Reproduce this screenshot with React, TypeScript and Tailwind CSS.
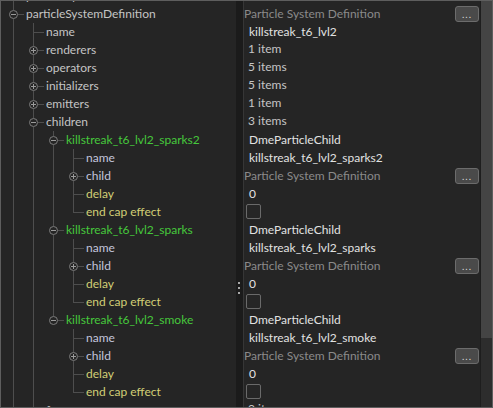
import React from "react";

type Row = {
  level: number;
  text: string;
  color: string;
  exp?: "minus" | "plus";
  guides: number[];
  last?: boolean;
  open?: boolean;
};

const C_MAIN = "#c4c4c4";
const C_ATTR = "#c3c6dc";
const C_YEL = "#d2cf76";
const C_GRN = "#46c83c";

const cx = (l: number) => 12 + 20 * l;

function childRows(parentLast: boolean): Row[] {
  const g = parentLast ? [12, 32] : [12, 32, 52];
  return [
    { level: 3, text: "name", color: C_ATTR, guides: g },
    { level: 3, text: "child", color: C_ATTR, exp: "plus", guides: g },
    { level: 3, text: "delay", color: C_YEL, guides: g },
    { level: 3, text: "end cap effect", color: C_YEL, guides: g, last: true },
  ];
}

const rows: Row[] = [
  { level: 0, text: "particleSystemDefinition", color: C_MAIN, guides: [] },
  { level: 0, text: "particleSystemDefinition", color: C_MAIN, exp: "minus", guides: [], open: true },
  { level: 1, text: "name", color: C_MAIN, guides: [12] },
  { level: 1, text: "renderers", color: C_MAIN, exp: "plus", guides: [12] },
  { level: 1, text: "operators", color: C_MAIN, exp: "plus", guides: [12] },
  { level: 1, text: "initializers", color: C_MAIN, exp: "plus", guides: [12] },
  { level: 1, text: "emitters", color: C_MAIN, exp: "plus", guides: [12] },
  { level: 1, text: "children", color: C_MAIN, exp: "minus", guides: [12], open: true },
  { level: 2, text: "killstreak_t6_lvl2_sparks2", color: C_GRN, exp: "minus", guides: [12, 32], open: true },
  ...childRows(false),
  { level: 2, text: "killstreak_t6_lvl2_sparks", color: C_GRN, exp: "minus", guides: [12, 32], open: true },
  ...childRows(false),
  { level: 2, text: "killstreak_t6_lvl2_smoke", color: C_GRN, exp: "minus", guides: [12, 32], open: true, last: true },
  ...childRows(true),
  { level: 1, text: "forces", color: C_MAIN, guides: [12] },
];

const LINE = "#4e4e4e";

function TreeRow({ r }: { r: Row }) {
  const x = cx(r.level);
  const w = x + 12;
  const h = 18;
  const mid = 9;
  return (
    <div className="flex h-[18px] items-center whitespace-nowrap">
      <svg width={w} height={h} className="shrink-0" shapeRendering="crispEdges">
        {r.guides.map((g) => (
          <line key={g} x1={g + 0.5} y1={0} x2={g + 0.5} y2={h} stroke={LINE} />
        ))}
        {/* own vertical */}
        {r.exp ? (
          <>
            <line x1={x + 0.5} y1={0} x2={x + 0.5} y2={mid - 4} stroke={LINE} />
            {!r.last && <line x1={x + 0.5} y1={mid + 5} x2={x + 0.5} y2={h} stroke={LINE} />}
            <line x1={x + 5} y1={mid + 0.5} x2={x + 11} y2={mid + 0.5} stroke={LINE} />
          </>
        ) : (
          <>
            <line x1={x + 0.5} y1={0} x2={x + 0.5} y2={r.last ? mid + 1 : h} stroke={LINE} />
            <line x1={x + 1} y1={mid + 0.5} x2={x + 11} y2={mid + 0.5} stroke={LINE} />
          </>
        )}
        {r.open && <line x1={x + 20.5} y1={mid + 3} x2={x + 20.5} y2={h} stroke={LINE} />}
        {r.exp && (
          <g shapeRendering="geometricPrecision">
            <circle cx={x + 0.5} cy={mid + 0.5} r={4} fill="none" stroke="#7c7c7c" strokeWidth={1} />
            <line x1={x - 2} y1={mid + 0.5} x2={x + 3} y2={mid + 0.5} stroke="#9a9a9a" />
            {r.exp === "plus" && <line x1={x + 0.5} y1={mid - 2} x2={x + 0.5} y2={mid + 3} stroke="#9a9a9a" />}
          </g>
        )}
      </svg>
      <span className="ml-[1px] text-[12px] leading-[18px]" style={{ color: r.color }}>
        {r.text}
      </span>
    </div>
  );
}

type VRow =
  | { kind: "empty" }
  | { kind: "label" }
  | { kind: "text"; text: string; color: string; shift?: boolean }
  | { kind: "check" };

const W = "#e2e2e2";
const G = "#c6c6c6";

const vrows: VRow[] = [
  { kind: "empty" },
  { kind: "label" },
  { kind: "text", text: "killstreak_t6_lvl2", color: W },
  { kind: "text", text: "1 item", color: G, shift: true },
  { kind: "text", text: "5 items", color: G, shift: true },
  { kind: "text", text: "5 items", color: G, shift: true },
  { kind: "text", text: "1 item", color: G, shift: true },
  { kind: "text", text: "3 items", color: G, shift: true },
  { kind: "text", text: "DmeParticleChild", color: W },
  { kind: "text", text: "killstreak_t6_lvl2_sparks2", color: W },
  { kind: "label" },
  { kind: "text", text: "0", color: W },
  { kind: "check" },
  { kind: "text", text: "DmeParticleChild", color: W },
  { kind: "text", text: "killstreak_t6_lvl2_sparks", color: W },
  { kind: "label" },
  { kind: "text", text: "0", color: W },
  { kind: "check" },
  { kind: "text", text: "DmeParticleChild", color: W },
  { kind: "text", text: "killstreak_t6_lvl2_smoke", color: W },
  { kind: "label" },
  { kind: "text", text: "0", color: W },
  { kind: "check" },
  { kind: "text", text: "0 items", color: G, shift: true },
];

function ValueRow({ v }: { v: VRow }) {
  if (v.kind === "empty") return <div className="h-[18px]" />;
  if (v.kind === "label")
    return (
      <div className="flex h-[18px] items-center justify-between pr-[1px]">
        <span className="text-[12px] leading-[18px] text-[#8a8a8a]">Particle System Definition</span>
        <div className="flex h-[16px] w-[24px] items-center justify-center rounded-[3px] border border-[#6c6c6c] bg-[#4a4a4a] text-[10px] leading-none tracking-[1px] text-[#d8d8d8]">
          ...
        </div>
      </div>
    );
  if (v.kind === "check")
    return (
      <div className="flex h-[18px] items-start pl-[2px] pt-[1px]">
        <div className="h-[15px] w-[15px] rounded-[2px] border border-[#6a6a6a] bg-[#262626]" />
      </div>
    );
  return (
    <div className={"flex h-[18px] items-center " + (v.shift ? "pl-[4px] pb-[3px]" : "pl-[5px]")}>
      <span className="whitespace-nowrap text-[12px] leading-[18px]" style={{ color: v.color }}>
        {v.text}
      </span>
    </div>
  );
}

export default function App() {
  return (
    <div
      className="flex h-[408px] w-[493px] overflow-hidden border border-[#5e5e5e] bg-[#252525]"
      style={{ fontFamily: "Lato, 'Liberation Sans', sans-serif" }}
    >
      <div className="w-[235px] shrink-0 overflow-hidden">
        <div className="-mt-[14px] flex flex-col">
          {rows.map((r, i) => (
            <TreeRow key={i} r={r} />
          ))}
        </div>
      </div>
      <div className="relative w-[7px] shrink-0 bg-[#1b1b1b]">
        <div className="absolute left-[2px] top-[281px] flex flex-col gap-[3px]">
          <div className="h-[2px] w-[2px] bg-[#a8a8a8]" />
          <div className="h-[2px] w-[2px] bg-[#a8a8a8]" />
          <div className="h-[2px] w-[2px] bg-[#a8a8a8]" />
        </div>
      </div>
      <div className="w-[1px] shrink-0 bg-[#363636]" />
      <div className="w-[236px] shrink-0 overflow-hidden">
        <div className="-mt-[14px] flex flex-col">
          {vrows.map((v, i) => (
            <ValueRow key={i} v={v} />
          ))}
        </div>
      </div>
      <div className="flex w-[12px] shrink-0 flex-col border-l border-[#1e1e1e] bg-[#2d2d2d]">
        <div className="h-[337px] bg-[#444444]" />
      </div>
    </div>
  );
}
